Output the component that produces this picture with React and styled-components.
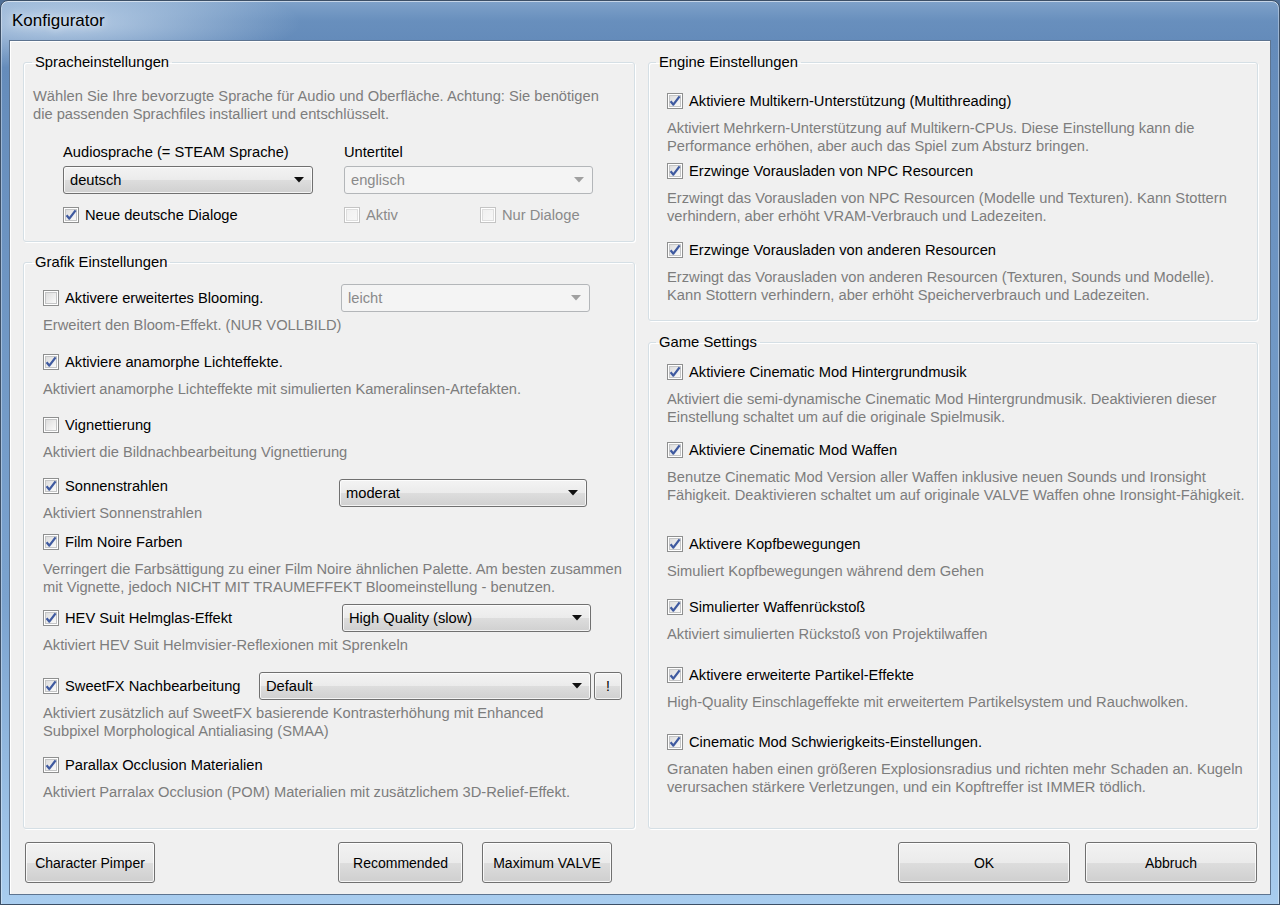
import React from 'react'
import styled, { createGlobalStyle } from 'styled-components'

const GlobalStyle = createGlobalStyle`
  html, body {
    margin: 0;
    padding: 0;
    width: 1280px;
    height: 905px;
    overflow: hidden;
    background: #4f6f96;
  }
  * {
    box-sizing: border-box;
  }
`

const uiFont = `"Liberation Sans", Arial, sans-serif`

const grafik = [
  { label: 'Aktivere erweitertes Blooming.', checked: false, top: 18,
    desc: ['Erweitert den Bloom-Effekt. (NUR VOLLBILD)'],
    combo: { value: 'leicht', at: 298, width: 249, disabled: true } },
  { label: 'Aktiviere anamorphe Lichteffekte.', checked: true, top: 19,
    desc: ['Aktiviert anamorphe Lichteffekte mit simulierten Kameralinsen-Artefakten.'] },
  { label: 'Vignettierung', checked: false, top: 18,
    desc: ['Aktiviert die Bildnachbearbeitung Vignettierung'] },
  { label: 'Sonnenstrahlen', checked: true, top: 16,
    desc: ['Aktiviert Sonnenstrahlen'],
    combo: { value: 'moderat', at: 296, width: 248, shift: 7 } },
  { label: 'Film Noire Farben', checked: true, top: 11,
    desc: [
      'Verringert die Farbsättigung zu einer Film Noire ähnlichen Palette. Am besten zusammen',
      'mit Vignette, jedoch NICHT MIT TRAUMEFFEKT Bloomeinstellung - benutzen.',
    ] },
  { label: 'HEV Suit Helmglas-Effekt', checked: true, top: 13,
    desc: ['Aktiviert HEV Suit Helmvisier-Reflexionen mit Sprenkeln'],
    combo: { value: 'High Quality (slow)', at: 299, width: 249 } },
  { label: 'SweetFX Nachbearbeitung', checked: true, top: 23,
    desc: [
      'Aktiviert zusätzlich auf SweetFX basierende Kontrasterhöhung mit Enhanced',
      'Subpixel Morphological Antialiasing (SMAA)',
    ],
    combo: { value: 'Default', at: 216, width: 332, extra: true } },
  { label: 'Parallax Occlusion Materialien', checked: true, top: 16,
    desc: ['Aktiviert Parralax Occlusion (POM) Materialien mit zusätzlichem 3D-Relief-Effekt.'] },
]

const engine = [
  { label: 'Aktiviere Multikern-Unterstützung (Multithreading)', checked: true, top: 21,
    desc: [
      'Aktiviert Mehrkern-Unterstützung auf Multikern-CPUs. Diese Einstellung kann die',
      'Performance erhöhen, aber auch das Spiel zum Absturz bringen.',
    ] },
  { label: 'Erzwinge Vorausladen von NPC Resourcen', checked: true, top: 7,
    desc: [
      'Erzwingt das Vorausladen von NPC Resourcen (Modelle und Texturen). Kann Stottern',
      'verhindern, aber erhöht VRAM-Verbrauch und Ladezeiten.',
    ] },
  { label: 'Erzwinge Vorausladen von anderen Resourcen', checked: true, top: 16,
    desc: [
      'Erzwingt das Vorausladen von anderen Resourcen (Texturen, Sounds und Modelle).',
      'Kann Stottern verhindern, aber erhöht Speicherverbrauch und Ladezeiten.',
    ] },
]

const game = [
  { label: 'Aktiviere Cinematic Mod Hintergrundmusik', checked: true, top: 12,
    desc: [
      'Aktiviert die semi-dynamische Cinematic Mod Hintergrundmusik. Deaktivieren dieser',
      'Einstellung schaltet um auf die originale Spielmusik.',
    ] },
  { label: 'Aktiviere Cinematic Mod Waffen', checked: true, top: 15,
    desc: [
      'Benutze Cinematic Mod Version aller Waffen inklusive neuen Sounds und Ironsight',
      'Fähigkeit. Deaktivieren schaltet um auf originale VALVE Waffen ohne Ironsight-Fähigkeit.',
    ] },
  { label: 'Aktivere Kopfbewegungen', checked: true, top: 31,
    desc: ['Simuliert Kopfbewegungen während dem Gehen'] },
  { label: 'Simulierter Waffenrückstoß', checked: true, top: 18,
    desc: ['Aktiviert simulierten Rückstoß von Projektilwaffen'] },
  { label: 'Aktivere erweiterte Partikel-Effekte', checked: true, top: 23,
    desc: ['High-Quality Einschlageffekte mit erweitertem Partikelsystem und Rauchwolken.'] },
  { label: 'Cinematic Mod Schwierigkeits-Einstellungen.', checked: true, top: 22,
    desc: [
      'Granaten haben einen größeren Explosionsradius und richten mehr Schaden an. Kugeln',
      'verursachen stärkere Verletzungen, und ein Kopftreffer ist IMMER tödlich.',
    ] },
]

function CheckBox({ checked, disabled }) {
  return (
    <svg width="16" height="16" viewBox="0 0 16 16">
      <defs>
        <linearGradient id={disabled ? 'cbOff' : 'cbOn'} x1="0" y1="0" x2="1" y2="1">
          <stop offset="0" stopColor={disabled ? '#f0f0f0' : '#dcdcdc'} />
          <stop offset="1" stopColor={disabled ? '#f7f7f7' : '#fbfbfb'} />
        </linearGradient>
      </defs>
      <rect x="0.5" y="0.5" width="15" height="15" fill="#fff" stroke={disabled ? '#c4c4c4' : '#8e8f8f'} />
      <rect x="2.5" y="2.5" width="11" height="11" fill={`url(#${disabled ? 'cbOff' : 'cbOn'})`} stroke={disabled ? '#dedede' : '#c4c5c6'} />
      {checked && (
        <path
          d="M3.6 8.2 L6.3 11.6 L12.6 3.4"
          fill="none"
          stroke="#3f5aa0"
          strokeWidth="2.3"
          strokeLinejoin="round"
        />
      )}
    </svg>
  )
}

function Arrow({ disabled }) {
  return (
    <svg width="10" height="6" viewBox="0 0 10 6">
      <path d="M0 0 H10 L5 5.5 Z" fill={disabled ? '#a0a0a0' : '#101010'} />
    </svg>
  )
}

function Combo({ value, width, disabled, shift }) {
  return (
    <ComboBox $width={width} $disabled={disabled} $shift={shift}>
      <span>{value}</span>
      <Arrow disabled={disabled} />
    </ComboBox>
  )
}

function Check({ label, checked, disabled, width }) {
  return (
    <CheckLabel $disabled={disabled} $width={width}>
      <CheckBox checked={checked} disabled={disabled} />
      <span>{label}</span>
    </CheckLabel>
  )
}

function Option({ item }) {
  const { combo } = item
  return (
    <OptionBlock $top={item.top}>
      <OptionRow>
        <Check label={item.label} checked={item.checked} width={combo && combo.at} />
        {combo && <Combo {...combo} />}
        {combo && combo.extra && <SmallButton>!</SmallButton>}
      </OptionRow>
      <Desc $top={9}>
        {item.desc.map((line) => (
          <div key={line}>{line}</div>
        ))}
      </Desc>
    </OptionBlock>
  )
}

export default function App() {
  return (
    <>
      <GlobalStyle />
      <Window>
        <TitleBar>Konfigurator</TitleBar>
        <Client>
          <Columns>
            <Column $gap={12}>
              <Group>
                <Legend>Spracheinstellungen</Legend>
                <LangBody>
                  <Desc>
                    <div>Wählen Sie Ihre bevorzugte Sprache für Audio und Oberfläche. Achtung: Sie benötigen</div>
                    <div>die passenden Sprachfiles installiert und entschlüsselt.</div>
                  </Desc>
                  <LangGrid>
                    <LangCol>
                      <FieldLabel>Audiosprache (= STEAM Sprache)</FieldLabel>
                      <Combo value="deutsch" width={250} />
                      <CheckRow>
                        <Check label="Neue deutsche Dialoge" checked />
                      </CheckRow>
                    </LangCol>
                    <LangCol>
                      <FieldLabel>Untertitel</FieldLabel>
                      <Combo value="englisch" width={249} disabled />
                      <CheckRow>
                        <Check label="Aktiv" disabled width={136} />
                        <Check label="Nur Dialoge" disabled />
                      </CheckRow>
                    </LangCol>
                  </LangGrid>
                </LangBody>
              </Group>
              <Group $grow>
                <Legend>Grafik Einstellungen</Legend>
                <OptionList>
                  {grafik.map((item) => (
                    <Option key={item.label} item={item} />
                  ))}
                </OptionList>
              </Group>
            </Column>
            <Column $gap={13}>
              <Group $pad={18}>
                <Legend>Engine Einstellungen</Legend>
                <OptionList $bottom={16}>
                  {engine.map((item) => (
                    <Option key={item.label} item={item} />
                  ))}
                </OptionList>
              </Group>
              <Group $grow $pad={18}>
                <Legend>Game Settings</Legend>
                <OptionList>
                  {game.map((item) => (
                    <Option key={item.label} item={item} />
                  ))}
                </OptionList>
              </Group>
            </Column>
          </Columns>
          <Footer>
            <FooterLeft>
              <Button $width={130}>Character Pimper</Button>
              <ButtonGroup>
                <Button $width={125}>Recommended</Button>
                <Button $width={130}>Maximum VALVE</Button>
              </ButtonGroup>
            </FooterLeft>
            <FooterRight>
              <Button $width={172}>OK</Button>
              <Button $width={172}>Abbruch</Button>
            </FooterRight>
          </Footer>
        </Client>
      </Window>
    </>
  )
}

const Window = styled.div`
  width: 1280px;
  height: 905px;
  display: flex;
  flex-direction: column;
  border: 1px solid #3c4f66;
  border-radius: 8px 8px 0 0;
  background:
    radial-gradient(ellipse 240px 46px at 60px 22px, rgba(220, 234, 248, 0.7), rgba(220, 234, 248, 0) 100%),
    linear-gradient(180deg, #7fa2ca 0px, #688fbd 20px, #648bba 40px, #7ba3cf 600px, #a9cdef 905px);
  box-shadow: inset 0 1px 0 rgba(255, 255, 255, 0.55), inset 1px 0 0 rgba(255, 255, 255, 0.35), inset -1px 0 0 rgba(255, 255, 255, 0.35);
  font-family: ${uiFont};
`

const TitleBar = styled.div`
  height: 39px;
  display: flex;
  align-items: center;
  padding-left: 11px;
  font-size: 17px;
  color: #000;
  text-shadow: 0 0 8px rgba(255, 255, 255, 0.9);
`

const Client = styled.div`
  flex: 1;
  margin: 0 8px 9px 8px;
  display: flex;
  flex-direction: column;
  background: #f0f0f0;
  border: 1px solid #5d7490;
  box-shadow: inset 1px 1px 0 #ffffff;
  padding: 13px 13px 11px 13px;
`

const Columns = styled.div`
  flex: 1;
  display: grid;
  grid-template-columns: 612px 610px;
  column-gap: 13px;
`

const Column = styled.div`
  display: flex;
  flex-direction: column;
  gap: ${(p) => p.$gap}px;
`

const Group = styled.fieldset`
  margin: 0;
  padding: 0 8px 0 ${(p) => p.$pad || 19}px;
  min-width: 0;
  border: 1px solid #d5dfe5;
  border-radius: 3px;
  box-shadow: inset 1px 1px 0 #ffffff, 1px 1px 0 #ffffff;
  flex: ${(p) => (p.$grow ? 1 : 'none')};
`

const Legend = styled.legend`
  margin-left: -11px;
  padding: 0 3px;
  font-size: 14.8px;
  line-height: 17px;
  color: #000;
`

const Desc = styled.div`
  margin-top: ${(p) => p.$top || 0}px;
  font-size: 14.7px;
  line-height: 18px;
  color: #7d7d7d;
  white-space: nowrap;
`

const LangBody = styled.div`
  margin-left: -10px;
  padding: 16px 0 17px;
`

const LangGrid = styled.div`
  display: grid;
  grid-template-columns: 281px 1fr;
  padding-left: 30px;
  margin-top: 20px;
`

const LangCol = styled.div`
  display: flex;
  flex-direction: column;
  align-items: flex-start;
`

const FieldLabel = styled.div`
  font-size: 14.7px;
  line-height: 18px;
  margin-bottom: 5px;
  color: #000;
`

const CheckRow = styled.div`
  display: flex;
  height: 18px;
  align-items: center;
  margin-top: 12px;
`

const CheckLabel = styled.label`
  display: flex;
  align-items: center;
  gap: 6px;
  flex: none;
  width: ${(p) => (p.$width ? `${p.$width}px` : 'auto')};
  font-size: 14.7px;
  line-height: 18px;
  color: ${(p) => (p.$disabled ? '#8a8a8a' : '#000')};
  white-space: nowrap;

  svg {
    flex: none;
  }
`

const ComboBox = styled.div`
  width: ${(p) => p.$width}px;
  height: 28px;
  flex: none;
  display: flex;
  align-items: center;
  justify-content: space-between;
  padding: 0 8px 0 6px;
  border: 1px solid ${(p) => (p.$disabled ? '#b3b6b9' : '#707070')};
  border-radius: 3px;
  background: ${(p) =>
    p.$disabled
      ? '#f4f4f4'
      : 'linear-gradient(180deg, #f3f3f3 0%, #ebebeb 50%, #dddddd 51%, #d0d0d0 100%)'};
  box-shadow: ${(p) => (p.$disabled ? 'none' : 'inset 0 0 0 1px rgba(255,255,255,0.75)')};
  transform: translateY(${(p) => p.$shift || 0}px);
  font-size: 14.7px;
  color: ${(p) => (p.$disabled ? '#8a8a8a' : '#000')};
`

const SmallButton = styled.div`
  width: 28px;
  height: 28px;
  margin-left: 3px;
  flex: none;
  display: flex;
  align-items: center;
  justify-content: center;
  border: 1px solid #707070;
  border-radius: 3px;
  background: linear-gradient(180deg, #f3f3f3 0%, #ebebeb 50%, #dddddd 51%, #d0d0d0 100%);
  box-shadow: inset 0 0 0 1px rgba(255, 255, 255, 0.75);
  font-size: 14px;
  color: #000;
`

const OptionList = styled.div`
  display: flex;
  flex-direction: column;
  padding-bottom: ${(p) => p.$bottom || 0}px;
`

const OptionBlock = styled.div`
  margin-top: ${(p) => p.$top}px;
`

const OptionRow = styled.div`
  height: 18px;
  display: flex;
  align-items: center;
`

const Footer = styled.div`
  display: grid;
  grid-template-columns: 612px 610px;
  column-gap: 13px;
  margin-top: 13px;
`

const FooterLeft = styled.div`
  display: flex;
  justify-content: space-between;
  padding: 0 23px 0 2px;
`

const FooterRight = styled.div`
  display: flex;
  justify-content: flex-end;
  gap: 15px;
  padding-right: 1px;
`

const ButtonGroup = styled.div`
  display: flex;
  gap: 19px;
`

const Button = styled.button`
  width: ${(p) => p.$width}px;
  height: 41px;
  padding: 0;
  border: 1px solid #707070;
  border-radius: 3px;
  background: linear-gradient(180deg, #f2f2f2 0%, #ebebeb 50%, #dddddd 51%, #cfcfcf 100%);
  box-shadow: inset 0 0 0 1px rgba(255, 255, 255, 0.8);
  font-family: ${uiFont};
  font-size: 14px;
  color: #000;
`
